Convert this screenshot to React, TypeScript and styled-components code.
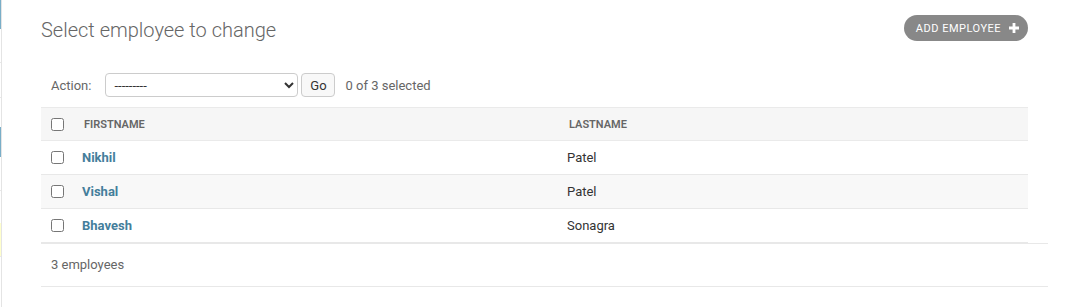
import styled, { createGlobalStyle } from "styled-components";

const GlobalStyle = createGlobalStyle`
  html, body {
    margin: 0;
    padding: 0;
    background: #fff;
    font-family: Roboto, "Liberation Sans", sans-serif;
    color: #333;
  }
`;

type Cell = { kind: "caption" | "row" | "current"; h: number; line?: boolean };

// only the right edge of the nav sidebar is in view
const navCells: Cell[] = [
  { kind: "caption", h: 29 },
  { kind: "row", h: 33, line: true },
  { kind: "row", h: 34, line: true },
  { kind: "row", h: 29 },
  { kind: "caption", h: 30 },
  { kind: "row", h: 33, line: true },
  { kind: "row", h: 32 },
  { kind: "current", h: 33, line: true },
  { kind: "row", h: 54 },
];

const employees = [
  { first: "Nikhil", last: "Patel" },
  { first: "Vishal", last: "Patel" },
  { first: "Bhavesh", last: "Sonagra" },
];

const PlusIcon = () => (
  <svg width="10" height="10" viewBox="0 0 10 10">
    <path d="M3.6 0h2.8v3.6H10v2.8H6.4V10H3.6V6.4H0V3.6h3.6z" fill="#fff" />
  </svg>
);

export default function App() {
  return (
    <>
      <GlobalStyle />
      <Page>
        <Nav>
          {navCells.map((c, i) => (
            <NavCell key={i} $kind={c.kind} $h={c.h} $line={c.line} />
          ))}
        </Nav>
        <Content>
          <Header>
            <Title>Select employee to change</Title>
            <AddLink href="#">
              Add employee
              <PlusIcon />
            </AddLink>
          </Header>
          <Actions>
            <Label>Action:</Label>
            <ActionSelect defaultValue="">
              <option value="">---------</option>
              <option value="delete">Delete selected employees</option>
            </ActionSelect>
            <GoButton type="button">Go</GoButton>
            <Counter>0 of 3 selected</Counter>
          </Actions>
          <ResultTable>
            <colgroup>
              <col width={33} />
              <col width={485} />
              <col />
            </colgroup>
            <thead>
              <tr>
                <HeadCell $check>
                  <Check type="checkbox" />
                </HeadCell>
                <HeadCell>Firstname</HeadCell>
                <HeadCell>Lastname</HeadCell>
              </tr>
            </thead>
            <tbody>
              {employees.map((e) => (
                <Row key={e.first}>
                  <Cell $check>
                    <Check type="checkbox" />
                  </Cell>
                  <Cell>
                    <NameLink href="#">{e.first}</NameLink>
                  </Cell>
                  <Cell>{e.last}</Cell>
                </Row>
              ))}
            </tbody>
          </ResultTable>
          <Paginator>3 employees</Paginator>
        </Content>
      </Page>
    </>
  );
}

const Page = styled.div`
  display: flex;
  min-height: 307px;
`;

const Nav = styled.div`
  width: 1px;
  border-right: 1px solid #e4e4e4;
  display: flex;
  flex-direction: column;
`;

const NavCell = styled.div<{ $kind: Cell["kind"]; $h: number; $line?: boolean }>`
  height: ${(p) => p.$h}px;
  background: ${(p) =>
    p.$kind === "caption" ? "#79aec8" : p.$kind === "current" ? "#ffffcc" : "#fff"};
  border-bottom: ${(p) => (p.$line ? "1px solid #e8e8e8" : "none")};
`;

const Content = styled.div`
  flex: 1;
  padding: 15px 39px 0 39px;
`;

const Header = styled.div`
  display: flex;
  justify-content: space-between;
  align-items: flex-start;
  height: 48px;
`;

const Title = styled.h1`
  margin: 0;
  font-size: 20px;
  line-height: 30px;
  font-weight: 300;
  color: #666;
`;

const AddLink = styled.a`
  display: flex;
  align-items: center;
  gap: 8px;
  height: 26px;
  padding: 0 9px 0 12px;
  border-radius: 15px;
  background: #888;
  color: #fff;
  font-size: 11px;
  letter-spacing: 0.5px;
  text-transform: uppercase;
  text-decoration: none;
`;

const Actions = styled.div`
  display: flex;
  align-items: center;
  padding: 10px;
  height: 24px;
  font-size: 13px;
  color: #666;
`;

const Label = styled.span`
  margin-right: 14px;
`;

const ActionSelect = styled.select`
  width: 193px;
  height: 24px;
  padding: 0 4px;
  border: 1px solid #ccc;
  border-radius: 4px;
  background: #fff;
  font-family: inherit;
  font-size: 13px;
  color: #333;
`;

const GoButton = styled.button`
  margin-left: 3px;
  width: 34px;
  height: 24px;
  padding: 0;
  border: 1px solid #ccc;
  border-radius: 4px;
  background: #f8f8f8;
  font-family: inherit;
  font-size: 13px;
  color: #333;
`;

const Counter = styled.span`
  margin-left: 10px;
`;

const ResultTable = styled.table`
  width: 100%;
  table-layout: fixed;
  border-collapse: collapse;
  font-size: 13px;
`;

const HeadCell = styled.th<{ $check?: boolean }>`
  height: 32px;
  padding: ${(p) => (p.$check ? "0 0 0 10px" : "0 10px")};
  text-align: left;
  background: #f6f6f6;
  border-top: 1px solid #eaeaea;
  border-bottom: 1px solid #eaeaea;
  font-size: 11px;
  font-weight: 600;
  text-transform: uppercase;
  color: #666;
`;

const Row = styled.tr`
  &:nth-child(even) {
    background: #f8f8f8;
  }
`;

const Cell = styled.td<{ $check?: boolean }>`
  height: 33px;
  padding: ${(p) => (p.$check ? "0 0 0 10px" : "0 8px")};
  border-bottom: 1px solid #e8e8e8;
  color: #333;
`;

const Check = styled.input`
  display: block;
  margin: 0;
  width: 13px;
  height: 13px;
`;

const NameLink = styled.a`
  color: #447e9b;
  font-weight: 700;
  text-decoration: none;
`;

const Paginator = styled.div`
  margin-right: -20px;
  padding: 0 10px;
  height: 42px;
  line-height: 42px;
  border-top: 1px solid #e8e8e8;
  border-bottom: 1px solid #e8e8e8;
  font-size: 13px;
  color: #666;
`;
